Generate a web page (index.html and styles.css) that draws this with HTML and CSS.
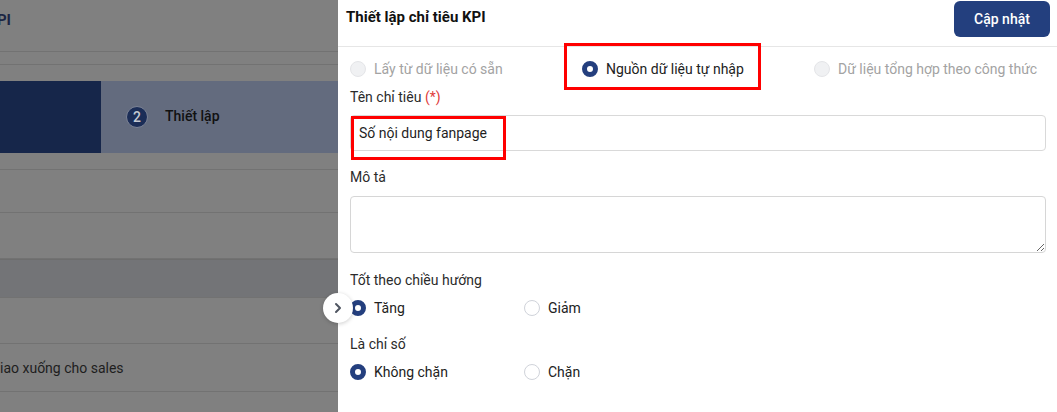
FILE: index.html
```html
<!doctype html>
<html lang="vi">
<head>
  <meta charset="UTF-8" />
  <meta name="viewport" content="width=device-width, initial-scale=1" />
  <title>Thiết lập chỉ tiêu KPI</title>
  <link rel="stylesheet" href="styles.css">
</head>
<body>
  <div id="page">
    <div class="row row-title">
      <div class="clip-right"><span>Thiết lập chỉ tiêu KPI</span></div>
    </div>
    <div class="row row-thin"></div>
    <div class="row-gap"></div>
    <div id="steps">
      <div class="step step-done"></div>
      <div class="step step-current">
        <span class="step-num">2</span>
        <span class="step-label">Thiết lập</span>
      </div>
    </div>
    <div class="row row-a"></div>
    <div class="row row-b"></div>
    <div class="row row-c"></div>
    <div class="row row-head"></div>
    <div class="row row-c"></div>
    <div class="row row-text"><span>iao xuống cho sales</span></div>
  </div>

  <div id="drawer">
    <div class="drawer-head">
      <h1>Thiết lập chỉ tiêu KPI</h1>
      <button class="btn-primary" type="button">Cập nhật</button>
    </div>

    <div class="drawer-body">
      <div class="radio-row sources">
        <label class="radio disabled"><span class="dot"></span>Lấy từ dữ liệu có sẵn</label>
        <label class="radio checked"><span class="dot"></span>Nguồn dữ liệu tự nhập</label>
        <label class="radio disabled"><span class="dot"></span>Dữ liệu tổng hợp theo công thức</label>
      </div>

      <div class="field-label first">Tên chỉ tiêu <span class="req">(*)</span></div>
      <input class="text-input" type="text" value="Số nội dung fanpage">

      <div class="field-label">Mô tả</div>
      <textarea class="text-area"></textarea>

      <div class="field-label spaced">Tốt theo chiều hướng</div>
      <div class="radio-row pair">
        <label class="radio checked"><span class="dot"></span>Tăng</label>
        <label class="radio"><span class="dot"></span>Giảm</label>
      </div>

      <div class="field-label">Là chỉ số</div>
      <div class="radio-row pair">
        <label class="radio checked"><span class="dot"></span>Không chặn</label>
        <label class="radio"><span class="dot"></span>Chặn</label>
      </div>
    </div>

    <button class="collapse" type="button" aria-label="Thu gọn">
      <svg width="10" height="12" viewBox="0 0 10 12"><path d="M3 2l4 4-4 4" fill="none" stroke="#4f5561" stroke-width="2" stroke-linecap="round" stroke-linejoin="round"/></svg>
    </button>

    <!-- highlight marks from the screenshot -->
    <div class="mark mark-source"></div>
    <div class="mark mark-name"></div>
  </div>
</body>
</html>
```

FILE: styles.css
```css
body {
  margin: 0;
  font-family: Roboto, "Noto Sans", Arial, sans-serif;
  font-size: 14px;
  display: flex;
  height: 412px;
  overflow: hidden;
}

/* dimmed page behind the drawer */
#page {
  width: 338px;
  flex: none;
  background: #808080;
  display: flex;
  flex-direction: column;
}
.row {
  border-bottom: 1px solid #727272;
  box-sizing: border-box;
}
.row-title {
  height: 52px;
  display: flex;
  align-items: flex-start;
}
.clip-right {
  width: 11px;
  overflow: hidden;
  display: flex;
  justify-content: flex-end;
  padding-top: 11px;
}
.clip-right span {
  white-space: nowrap;
  font-size: 15px;
  font-weight: 700;
  color: #1c2644;
}
.row-thin { height: 13px; }
.row-gap { height: 16px; }
#steps {
  height: 72px;
  display: flex;
}
.step-done {
  width: 101px;
  background: #16264a;
}
.step-current {
  flex: 1;
  background: #636b7e;
  display: flex;
  align-items: center;
  padding-left: 25px;
}
.step-num {
  width: 20px;
  height: 20px;
  border-radius: 50%;
  border: 1px solid #7c8396;
  background: #1b2d57;
  color: #c5c9d2;
  font-size: 14px;
  font-weight: 500;
  display: flex;
  align-items: center;
  justify-content: center;
}
.step-label {
  margin-left: 17px;
  font-weight: 500;
  color: #111;
  margin-bottom: 2px;
}
.row-a { height: 17px; }
.row-b { height: 43px; }
.row-c { height: 46px; }
.row-head {
  height: 39px;
  background: #737477;
  border-top: 1px solid #6d6d6d;
}
.row-text {
  height: 48px;
  display: flex;
  align-items: center;
  color: #1e1e1e;
  font-size: 14px;
}

/* drawer */
#drawer {
  flex: 1;
  background: #fff;
  position: relative;
  display: flex;
  flex-direction: column;
}
.drawer-head {
  height: 47px;
  box-sizing: border-box;
  border-bottom: 1px solid #e6e6e6;
  display: flex;
  justify-content: space-between;
  align-items: flex-start;
  padding: 0 7px 0 8px;
}
.drawer-head h1 {
  margin: 0;
  padding-top: 7px;
  line-height: 20px;
  font-size: 15px;
  font-weight: 700;
  color: #111;
}
.btn-primary {
  margin-top: 1px;
  width: 96px;
  height: 36px;
  border: 0;
  border-radius: 6px;
  background: #233f7e;
  color: #fff;
  font-family: inherit;
  font-size: 14px;
  font-weight: 500;
}
.drawer-body {
  padding: 0 11px 0 12px;
  display: flex;
  flex-direction: column;
}

.radio-row {
  display: grid;
  height: 20px;
}
.sources {
  grid-template-columns: repeat(3, 1fr);
  margin-top: 12px;
}
.pair {
  grid-template-columns: 174px 174px;
  margin-top: 8px;
}
.radio {
  display: flex;
  align-items: center;
  gap: 8px;
  color: #222;
  white-space: nowrap;
}
.dot {
  width: 16px;
  height: 16px;
  box-sizing: border-box;
  border-radius: 50%;
  border: 1px solid #d0d3da;
  background: #fff;
  flex: none;
}
.radio.checked .dot {
  border: 5px solid #243f7e;
  background: #fff;
}
.radio.disabled { color: #a3a3a3; }
.radio.disabled .dot {
  background: #f0f1f3;
  border-color: #e4e5e8;
}

.field-label {
  margin-top: 16px;
  line-height: 20px;
  color: #2b2b2b;
}
.field-label.first { margin-top: 8px; }
.field-label.spaced { margin-top: 17px; }
.req { color: #e03b3b; }

.text-input {
  margin-top: 8px;
  height: 36px;
  box-sizing: border-box;
  border: 1px solid #d9d9d9;
  border-radius: 4px;
  padding: 0 8px;
  font-family: inherit;
  font-size: 14px;
  color: #1f1f1f;
}
.text-area {
  margin-top: 9px;
  height: 57px;
  box-sizing: border-box;
  border: 1px solid #d6d6d6;
  border-radius: 4px;
  font-family: inherit;
  font-size: 14px;
}

.collapse {
  position: absolute;
  left: -15px;
  top: 293px;
  width: 30px;
  height: 30px;
  border: 0;
  border-radius: 50%;
  background: #fff;
  box-shadow: 0 1px 4px rgba(0, 0, 0, 0.2);
  padding: 0;
  display: flex;
  align-items: center;
  justify-content: center;
}

.mark {
  position: absolute;
  border: 3px solid #f00;
  box-sizing: border-box;
}
.mark-source {
  left: 226px;
  top: 43px;
  width: 197px;
  height: 47px;
}
.mark-name {
  left: 13px;
  top: 116px;
  width: 155px;
  height: 44px;
}
```
